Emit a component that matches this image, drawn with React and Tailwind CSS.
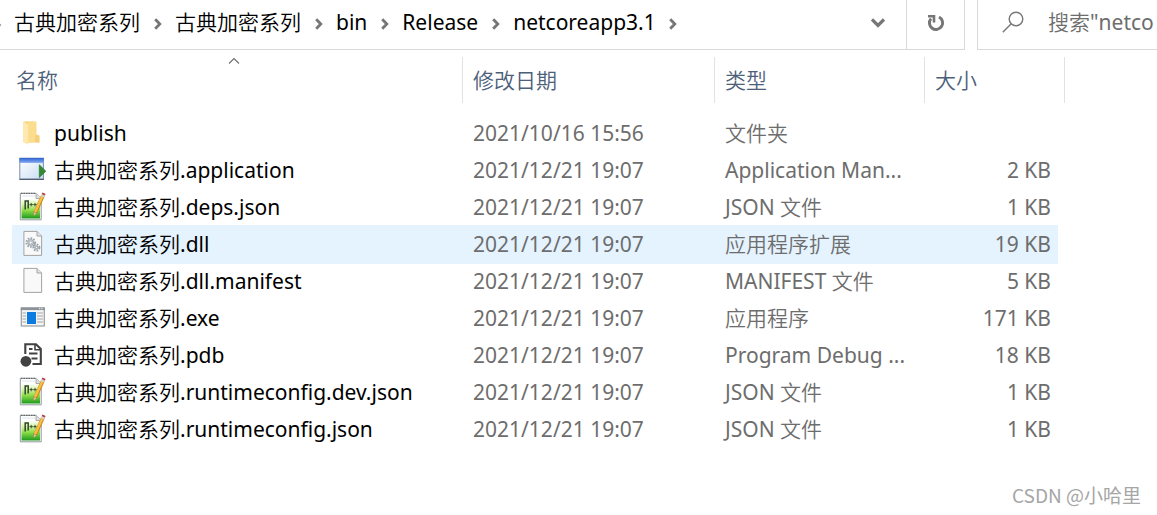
import React, { useState } from "react";

const crumbs = ["古典加密系列", "古典加密系列", "bin", "Release", "netcoreapp3.1"];

const files = [
  { icon: "folder", name: "publish", date: "2021/10/16 15:56", type: "文件夹", size: "" },
  { icon: "app", name: "古典加密系列.application", date: "2021/12/21 19:07", type: "Application Man...", size: "2 KB" },
  { icon: "json", name: "古典加密系列.deps.json", date: "2021/12/21 19:07", type: "JSON 文件", size: "1 KB" },
  { icon: "dll", name: "古典加密系列.dll", date: "2021/12/21 19:07", type: "应用程序扩展", size: "19 KB" },
  { icon: "blank", name: "古典加密系列.dll.manifest", date: "2021/12/21 19:07", type: "MANIFEST 文件", size: "5 KB" },
  { icon: "exe", name: "古典加密系列.exe", date: "2021/12/21 19:07", type: "应用程序", size: "171 KB" },
  { icon: "pdb", name: "古典加密系列.pdb", date: "2021/12/21 19:07", type: "Program Debug ...", size: "18 KB" },
  { icon: "json", name: "古典加密系列.runtimeconfig.dev.json", date: "2021/12/21 19:07", type: "JSON 文件", size: "1 KB" },
  { icon: "json", name: "古典加密系列.runtimeconfig.json", date: "2021/12/21 19:07", type: "JSON 文件", size: "1 KB" },
];

// Small gear used on the dll icon
function Gear({ x, y, r }) {
  return (
    <g>
      <circle cx={x} cy={y} r={r} fill="none" stroke="#9aa3aa" strokeWidth="2" strokeDasharray="1.6 1.2" />
      <circle cx={x} cy={y} r={r - 1.4} fill="#d3dade" stroke="#98a1a8" strokeWidth="1" />
      <circle cx={x} cy={y} r={r / 3} fill="#fff" stroke="#98a1a8" strokeWidth="0.7" />
    </g>
  );
}

function Page() {
  return (
    <g>
      <path d="M4.9 2.4H18L22.6 7V26.4H4.9Z" fill="#f9f9f9" stroke="#a3a3a3" strokeWidth="1" />
      <path d="M18 2.4V7H22.6" fill="#e4e4e4" stroke="#a3a3a3" strokeWidth="1" />
    </g>
  );
}

const drawings = {
  folder: (
    <g>
      <path d="M4.5 3.5H14.5V24.5H4.5Z" fill="#f2cf72" />
      <path d="M8.5 3.5H17.5V17L20.4 18.2V24.5H8.5Z" fill="#fbdd8d" />
      <path d="M17.5 16.5L20.4 17.5V24.5H16V18Z" fill="#f5d07a" />
      <path d="M4.5 3.5L9.2 6.5V26.8L4.5 24.3Z" fill="#ffe9ae" />
    </g>
  ),
  app: (
    <g>
      <defs>
        <linearGradient id="appBody" x1="0" y1="0" x2="1" y2="1">
          <stop offset="0" stopColor="#ffffff" />
          <stop offset="1" stopColor="#c9dcf3" />
        </linearGradient>
        <linearGradient id="appBar" x1="0" y1="0" x2="0" y2="1">
          <stop offset="0" stopColor="#2e62cf" />
          <stop offset="1" stopColor="#82aaf1" />
        </linearGradient>
      </defs>
      <rect x="0.8" y="3.3" width="23.6" height="21" fill="url(#appBody)" stroke="#7c8ea8" />
      <path d="M0.5 24.3H24.9" stroke="#48566c" strokeWidth="1.2" />
      <rect x="0.4" y="2.9" width="24.5" height="5" fill="url(#appBar)" />
      <path d="M20.3 9.8L26.8 16.2L20.3 22.6Z" fill="#328a32" stroke="#206c22" strokeWidth="0.6" />
    </g>
  ),
  json: (
    <g>
      <defs>
        <linearGradient id="jsonGreen" x1="0" y1="0" x2="0" y2="1">
          <stop offset="0" stopColor="#ffffff" />
          <stop offset="0.3" stopColor="#d3f3a6" />
          <stop offset="0.6" stopColor="#8bdc48" />
          <stop offset="1" stopColor="#1c9a1c" />
        </linearGradient>
      </defs>
      <path d="M1.3 1.3H17L22.2 6.5V27.8H1.3Z" fill="#fff" stroke="#8e9799" strokeWidth="1" />
      <path d="M2 1.3H17" stroke="#555" strokeDasharray="1.5 1" strokeWidth="1" />
      <path d="M3 4H16" stroke="#d5dfe8" strokeWidth="0.8" />
      <rect x="2.5" y="6.5" width="18.5" height="20" fill="url(#jsonGreen)" />
      <path d="M17 1.3V6.5H22.2" fill="#dedede" stroke="#999" strokeWidth="0.8" />
      <path d="M6.2 17.5V9H9.2V16.5" fill="none" stroke="#31452a" strokeWidth="1.5" />
      <path d="M10.5 12.6H13.9M12.2 10.9V14.3M14.3 12.6H17.7M16 10.9V14.3" stroke="#31452a" strokeWidth="0.9" />
      <path d="M24 3.5L16.3 20.5" stroke="#c98420" strokeWidth="3.8" />
      <path d="M23.6 3.7L16 20.3" stroke="#f9bf42" strokeWidth="2.4" />
      <path d="M14.6 19.7L17.9 21.2L14.7 23.9Z" fill="#e8cda4" stroke="#8a6436" strokeWidth="0.4" />
      <path d="M23.3 4.8L24.8 1.6" stroke="#ced2d5" strokeWidth="3.4" />
      <path d="M24.3 2.8L25 1.3" stroke="#b8373b" strokeWidth="3.4" />
    </g>
  ),
  dll: (
    <g>
      <Page />
      <Gear x={11.7} y={13.5} r={4.3} />
      <Gear x={17.4} y={18.6} r={3} />
    </g>
  ),
  blank: <Page />,
  exe: (
    <g>
      <rect x="2.3" y="5" width="23" height="18" fill="#f4f4f4" stroke="#9b9da0" strokeWidth="1.2" />
      <rect x="1.8" y="4.5" width="24" height="2.6" fill="#8b9299" />
      <path d="M20 5.7H21.3M22.3 5.7H23.6" stroke="#fff" strokeWidth="0.9" />
      <rect x="8" y="9" width="9" height="12" fill="#0d7ae0" />
      <path d="M3.5 10H7M3.5 13H7M3.5 16H7M3.5 19H7M18 10H24M18 13H24M18 16H24M18 19H24" stroke="#a6a6a6" strokeWidth="1.2" />
    </g>
  ),
  pdb: (
    <g>
      <path d="M6.3 14V4.2H17L21.8 9V24H13.5" fill="#fff" stroke="#424242" strokeWidth="2.1" />
      <path d="M16 4.2V9.8H22" fill="none" stroke="#424242" strokeWidth="1.6" />
      <path d="M10 9H13.5M10 13.5H18.5M12.5 18.5H18.5" stroke="#424242" strokeWidth="1.8" />
      <circle cx="6.9" cy="21.3" r="5.4" fill="#424242" />
    </g>
  ),
};

function FileIcon({ kind }) {
  return (
    <svg viewBox="0 0 28 32" className="w-7 h-8 shrink-0" aria-hidden="true">
      {drawings[kind]}
    </svg>
  );
}

function CrumbArrow() {
  return (
    <svg viewBox="0 0 8 12" className="w-2 h-3" fill="none" stroke="#767676" strokeWidth="2.8" aria-hidden="true">
      <path d="M1.2 1.2L5.8 6L1.2 10.8" />
    </svg>
  );
}

function AddressBar() {
  return (
    <div className="flex gap-3 h-[50px]">
      <div className="flex flex-1 min-w-0 border-b border-r border-[#d9d9d9]">
        <nav className="flex flex-1 items-center min-w-0 overflow-hidden text-black">
          <svg viewBox="0 0 14 12" className="w-3.5 h-3 shrink-0" aria-hidden="true">
            <path d="M-4 1.2L0.4 6L-4 10.8" fill="none" stroke="#999" strokeWidth="1.4" />
          </svg>
          {crumbs.map((crumb, i) => (
            <div key={i} className="flex items-center pb-1.5 whitespace-nowrap">
              <a href="#">{crumb}</a>
              <span className="flex justify-center w-[35px] pt-1">
                <CrumbArrow />
              </span>
            </div>
          ))}
        </nav>
        <button aria-label="历史记录" className="flex items-center justify-center w-14 pb-1">
          <svg viewBox="0 0 14 10" className="w-3.5 h-2.5" fill="none" stroke="#767676" strokeWidth="3.2">
            <path d="M1 1.5L7 7.5L13 1.5" />
          </svg>
        </button>
        <button aria-label="刷新" className="flex items-center justify-center w-[58px] pb-1 border-l border-[#d9d9d9]">
          <svg viewBox="0 0 18 18" className="w-[18px] h-[18px]" fill="none" stroke="#767676" strokeWidth="3">
            <path d="M12 3A6.6 6.6 0 1 1 4 4.6" />
            <path d="M1 2.2H7V8.4" strokeWidth="2.6" />
          </svg>
        </button>
      </div>
      <label className="flex items-center w-[180px] pl-6 pr-0.5 pb-1.5 border-b border-l border-[#d9d9d9] text-[#6d6d6d]">
        <svg viewBox="0 0 22 22" className="w-[22px] h-[22px] shrink-0" fill="none" stroke="#767676" strokeWidth="1.4">
          <circle cx="14" cy="8" r="6.8" />
          <path d="M9.2 12.8L0.8 21.2" />
        </svg>
        <input
          type="text"
          aria-label="搜索"
          placeholder={'搜索"netcoreapp3.1"'}
          className="flex-1 min-w-0 ml-6 outline-none placeholder:text-[#6d6d6d]"
        />
      </label>
    </div>
  );
}

function HeaderCell({ label, sorted, colSpan }) {
  return (
    <th colSpan={colSpan} scope="col" className="p-0 font-normal border-r border-[#e2e2e2]">
      <button className={`flex flex-col w-full h-[46px] text-left ${sorted ? "pl-1 pr-2.5" : "pl-2.5"}`}>
        <span className="flex justify-center w-full h-2.5">
          {sorted && (
            <svg viewBox="0 0 12 8" className="w-3 h-2" fill="none" stroke="#6d6d6d" strokeWidth="1.1">
              <path d="M1 6.5L6 1.5L11 6.5" />
            </svg>
          )}
        </span>
        <span className="leading-[26px]">{label}</span>
      </button>
    </th>
  );
}

export default function App() {
  const [selected, setSelected] = useState(3);

  return (
    <div className="flex flex-col min-h-screen overflow-hidden bg-white text-[21px] leading-7 font-['Noto_Sans','Noto_Sans_CJK_SC_DemiLight','Noto_Sans_CJK_SC_Light','Noto_Sans_CJK_SC',sans-serif]">
      <AddressBar />

      <main className="flex-1 pt-[7px] pl-3 pr-[92px]">
        <table className="w-full table-fixed border-separate border-spacing-0">
          <colgroup>
            <col />
            <col className="w-[252px]" />
            <col className="w-[210px]" />
            <col className="w-[133px]" />
            <col className="w-[7px]" />
          </colgroup>
          <thead className="text-[#4c607a]">
            <tr>
              <HeaderCell label="名称" sorted />
              <HeaderCell label="修改日期" />
              <HeaderCell label="类型" />
              <HeaderCell label="大小" colSpan={2} />
            </tr>
            <tr aria-hidden="true">
              <td colSpan={5} className="h-3 p-0" />
            </tr>
          </thead>
          <tbody className="text-[#6d6d6d]">
            {files.map((file, i) => {
              const cell = i === selected ? "bg-[#e5f3ff] shadow-[0_-1px_0_#e5f3ff,0_1px_0_#e5f3ff]" : "";
              return (
                <tr key={file.name} onClick={() => setSelected(i)}>
                  <td className={`h-[37px] p-0 pl-[7px] text-black ${cell}`}>
                    <div className="flex items-center gap-[7px] h-8">
                      <FileIcon kind={file.icon} />
                      <span className="pb-0.5 whitespace-nowrap">{file.name}</span>
                    </div>
                  </td>
                  <td className={`p-0 pl-2.5 pb-0.5 ${cell}`}>{file.date}</td>
                  <td className={`p-0 pl-2.5 pb-0.5 whitespace-nowrap ${cell}`}>{file.type}</td>
                  <td className={`p-0 pr-[7px] pb-0.5 text-right ${cell}`}>{file.size}</td>
                  <td className="p-0" />
                </tr>
              );
            })}
          </tbody>
        </table>
      </main>

      <footer className="pr-4 pb-1.5 text-right text-[19px] text-[#a6a6a6] font-['Noto_Sans_CJK_SC',sans-serif]">
        CSDN @小哈里
      </footer>
    </div>
  );
}
